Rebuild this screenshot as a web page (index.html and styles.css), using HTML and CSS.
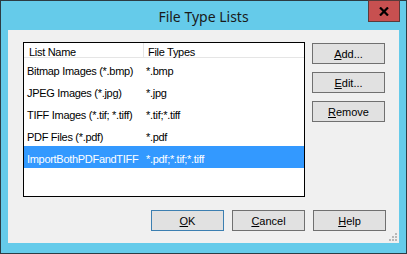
FILE: index.html
```html
<!DOCTYPE html>
<html lang="en">
<head>
    <meta charset="UTF-8">
    <title>File Type Lists</title>
    <link rel="stylesheet" href="styles.css">
</head>
<body>
    <div class="window">
        <div class="title-bar">
            <div class="window-title">File Type Lists</div>
            <div class="close-btn">
                <svg width="10" height="9" viewBox="0 0 10 9">
                    <path d="M1 0.5 L9 8.5 M9 0.5 L1 8.5" stroke="#000" stroke-width="2.2"/>
                </svg>
            </div>
        </div>

        <div class="client">
            <div class="main-row">
                <div class="list-box">
                    <div class="list-row list-header">
                        <div class="col-name">List Name</div>
                        <div class="col-types">File Types</div>
                    </div>
                    <div class="list-row">
                        <div class="col-name">Bitmap Images (*.bmp)</div>
                        <div class="col-types">*.bmp</div>
                    </div>
                    <div class="list-row">
                        <div class="col-name">JPEG Images (*.jpg)</div>
                        <div class="col-types">*.jpg</div>
                    </div>
                    <div class="list-row">
                        <div class="col-name">TIFF Images (*.tif; *.tiff)</div>
                        <div class="col-types">*.tif;*.tiff</div>
                    </div>
                    <div class="list-row">
                        <div class="col-name">PDF Files (*.pdf)</div>
                        <div class="col-types">*.pdf</div>
                    </div>
                    <div class="list-row selected">
                        <div class="col-name">ImportBothPDFandTIFF</div>
                        <div class="col-types">*.pdf;*.tif;*.tiff</div>
                    </div>
                </div>

                <div class="side-buttons">
                    <button class="win-button"><u>A</u>dd...</button>
                    <button class="win-button"><u>E</u>dit...</button>
                    <button class="win-button"><u>R</u>emove</button>
                </div>
            </div>

            <div class="footer-row">
                <button class="win-button default"><u>O</u>K</button>
                <button class="win-button"><u>C</u>ancel</button>
                <button class="win-button"><u>H</u>elp</button>
            </div>

            <div class="size-grip">
                <span></span><span></span><span></span>
                <span></span><span></span><span></span>
            </div>
        </div>
    </div>
</body>
</html>
```

FILE: styles.css
```css
:root {
    --frame-color: #65cbea;
    --edge-color: #2c3c44;
    --client-color: #f0f0f0;
    --select-color: #3399ff;
    --button-border: #707070;
    --button-bg: #e1e1e1;
}

body {
    margin: 0;
    padding: 0;
    font-family: 'Liberation Sans', Arial, sans-serif;
    font-size: 11px;
    color: #000;
}

.window {
    position: relative;
    width: 391px;
    height: 252px;
    border: 1px solid var(--edge-color);
    background-color: var(--frame-color);
    padding: 0 7px;
    display: flex;
    flex-direction: column;
}

.title-bar {
    height: 29px;
    display: flex;
    justify-content: center;
    align-items: center;
}

.window-title {
    font-family: 'Noto Sans', 'Open Sans', sans-serif;
    font-size: 14px;
    color: #1a1a1a;
    padding-top: 1px;
}

.close-btn {
    position: absolute;
    top: -1px;
    right: 6px;
    width: 30px;
    height: 20px;
    background-color: #c75050;
    border: 1px solid #5a3a3a;
    display: flex;
    justify-content: center;
    align-items: center;
}

.client {
    position: relative;
    background-color: var(--client-color);
    height: 213px;
    padding: 12px 13px 0 15px;
    box-sizing: border-box;
}

.main-row {
    display: flex;
    gap: 7px;
}

.list-box {
    width: 282px;
    height: 155px;
    border: 1px solid #000;
    background-color: #fff;
    box-sizing: border-box;
    letter-spacing: -0.3px;
}

.list-row {
    display: flex;
    height: 22px;
    align-items: center;
    white-space: nowrap;
}

.list-row .col-name {
    width: 117px;
    padding-left: 3px;
    padding-top: 3px;
}

.list-row .col-types {
    padding-left: 2px;
    padding-top: 3px;
}

.list-header {
    height: 14px;
    align-items: stretch;
    border-bottom: 1px solid #e5e5e5;
    padding-top: 0;
}

.list-header .col-name {
    width: 114px;
    padding-left: 5px;
    border-right: 1px solid #e5e5e5;
    line-height: 14px;
    padding-top: 2px;
}

.list-header .col-types {
    padding-left: 4px;
    line-height: 14px;
    padding-top: 2px;
}

.list-row.selected {
    background-color: var(--select-color);
    color: #fff;
}

.side-buttons {
    display: flex;
    flex-direction: column;
    gap: 8px;
    padding-top: 1px;
}

.win-button {
    width: 73px;
    height: 21px;
    background-color: var(--button-bg);
    border: 1px solid var(--button-border);
    font-family: 'Liberation Sans', Arial, sans-serif;
    font-size: 11px;
    color: #000;
    padding: 0;
    margin: 0;
}

.win-button.default {
    border-color: #3c7fb1;
}

.footer-row {
    display: flex;
    justify-content: flex-end;
    gap: 8px;
    margin-top: 13px;
}

.size-grip {
    position: absolute;
    right: 2px;
    bottom: 2px;
    width: 9px;
    height: 9px;
}

.size-grip span {
    position: absolute;
    width: 2px;
    height: 2px;
    background-color: #b8b8b8;
}

.size-grip span:nth-child(1) { right: 0; bottom: 0; }
.size-grip span:nth-child(2) { right: 3px; bottom: 0; }
.size-grip span:nth-child(3) { right: 6px; bottom: 0; }
.size-grip span:nth-child(4) { right: 0; bottom: 3px; }
.size-grip span:nth-child(5) { right: 3px; bottom: 3px; }
.size-grip span:nth-child(6) { right: 0; bottom: 6px; }
```
